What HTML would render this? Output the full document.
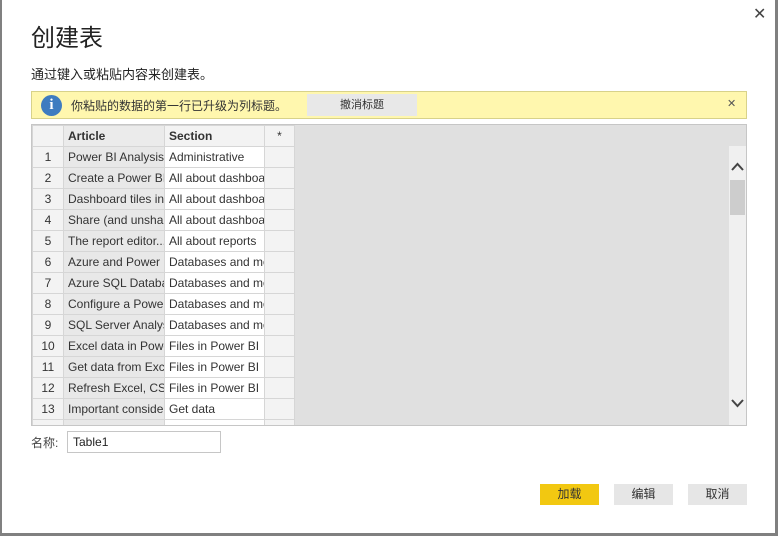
<!DOCTYPE html>
<html><head><meta charset="utf-8"><style>
*{margin:0;padding:0;box-sizing:border-box}
body{width:778px;height:536px;background:#fff;position:relative;overflow:hidden;font-family:"Segoe UI","Liberation Sans","Noto Sans CJK SC",sans-serif;color:#333}
.bl{position:absolute;left:0;top:0;width:2px;height:536px;background:#808080}
.br{position:absolute;right:0;top:0;width:3px;height:536px;background:#808080}
.bb{position:absolute;left:0;bottom:0;width:778px;height:3px;background:#808080}
.abs{position:absolute}
.title{left:31px;top:18px;font-size:24px;color:#222;font-family:"Liberation Sans","Noto Sans CJK SC",sans-serif}
.sub{left:31px;top:64px;font-size:13px;color:#222;font-family:"Liberation Sans","Noto Sans CJK SC",sans-serif}
.banner{left:31px;top:91px;width:716px;height:28px;background:#fff7ae;border:1px solid #d8d28a}
.grid{left:31px;top:124px;width:716px;height:302px;background:#e0e0e0;border:1px solid #c6c6c6;overflow:hidden}
table{border-collapse:collapse;font-size:12px;font-family:"Liberation Sans",sans-serif}
td{height:21px;border:1px solid #d6d6d6;white-space:nowrap;overflow:hidden;padding:0 4px;max-width:100px}
td.n{width:31px;background:#f3f3f3;text-align:center;padding:0}
td.a{width:101px;max-width:101px;background:#e8e8e8;color:#333}
td.s{width:100px;max-width:100px;background:#fff}
td.x{width:30px;background:#f3f3f3}
tr.h td{font-weight:bold;background:#f3f3f3}
.btn{position:absolute;top:484px;height:21px;width:59px;background:#e6e6e6;font-size:12px;text-align:center;line-height:21px;font-family:"Liberation Sans","Noto Sans CJK SC",sans-serif}
</style></head><body>
<div class="bl"></div><div class="br"></div><div class="bb"></div>
<div class="abs" style="left:753px;top:4px;font-size:16px;color:#444">✕</div>
<div class="abs title">创建表</div>
<div class="abs sub">通过键入或粘贴内容来创建表。</div>
<div class="abs banner">
 <div class="abs" style="left:9px;top:3px;width:21px;height:21px;border-radius:50%;background:#3e7cc0;color:#fff;font-weight:bold;font-size:15px;text-align:center;line-height:21px;font-family:'Liberation Serif',serif">i</div>
 <div class="abs" style="left:39px;top:5px;font-size:12px;color:#333;font-family:'Liberation Sans','Noto Sans CJK SC',sans-serif">你粘贴的数据的第一行已升级为列标题。</div>
 <div class="abs" style="left:275px;top:2px;width:110px;height:22px;background:#e8e8e8;font-size:11px;text-align:center;line-height:22px;font-family:'Liberation Sans','Noto Sans CJK SC',sans-serif">撤消标题</div>
 <div class="abs" style="left:695px;top:5px;font-size:11px;color:#555">✕</div>
</div>
<div class="abs grid">
<table>
<tr class="h"><td class="n"></td><td class="a" style="background:#ebebeb">Article</td><td class="s" style="background:#f3f3f3">Section</td><td class="x" style="text-align:center;font-weight:normal">*</td></tr>
<tr><td class="n">1</td><td class="a">Power BI Analysis T</td><td class="s">Administrative</td><td class="x"></td></tr>
<tr><td class="n">2</td><td class="a">Create a Power BI</td><td class="s">All about dashboards</td><td class="x"></td></tr>
<tr><td class="n">3</td><td class="a">Dashboard tiles in</td><td class="s">All about dashboards</td><td class="x"></td></tr>
<tr><td class="n">4</td><td class="a">Share (and unshare</td><td class="s">All about dashboards</td><td class="x"></td></tr>
<tr><td class="n">5</td><td class="a">The report editor...</td><td class="s">All about reports</td><td class="x"></td></tr>
<tr><td class="n">6</td><td class="a">Azure and Power BI</td><td class="s">Databases and more</td><td class="x"></td></tr>
<tr><td class="n">7</td><td class="a">Azure SQL Database</td><td class="s">Databases and more</td><td class="x"></td></tr>
<tr><td class="n">8</td><td class="a">Configure a Power</td><td class="s">Databases and more</td><td class="x"></td></tr>
<tr><td class="n">9</td><td class="a">SQL Server Analysis</td><td class="s">Databases and more</td><td class="x"></td></tr>
<tr><td class="n">10</td><td class="a">Excel data in Power</td><td class="s">Files in Power BI</td><td class="x"></td></tr>
<tr><td class="n">11</td><td class="a">Get data from Excel</td><td class="s">Files in Power BI</td><td class="x"></td></tr>
<tr><td class="n">12</td><td class="a">Refresh Excel, CSV</td><td class="s">Files in Power BI</td><td class="x"></td></tr>
<tr><td class="n">13</td><td class="a">Important consider</td><td class="s">Get data</td><td class="x"></td></tr>
<tr><td class="n"></td><td class="a"></td><td class="s"></td><td class="x"></td></tr>
</table>
<div class="abs" style="left:697px;top:21px;width:17px;height:280px;background:#f0f0f0">
 <svg class="abs" style="left:2px;top:16px" width="13" height="9"><path d="M1 8 L6.5 2 L12 8" stroke="#444" stroke-width="2" fill="none"/></svg>
 <div class="abs" style="left:1px;top:34px;width:15px;height:35px;background:#cdcdcd"></div>
 <svg class="abs" style="left:2px;top:253px" width="13" height="9"><path d="M1 1 L6.5 7 L12 1" stroke="#444" stroke-width="2" fill="none"/></svg>
</div>
</div>
<div class="abs" style="left:31px;top:434px;font-size:12px;color:#444;font-family:'Liberation Sans','Noto Sans CJK SC',sans-serif">名称:</div>
<div class="abs" style="left:67px;top:431px;width:154px;height:22px;border:1px solid #c6c6c6;font-size:12px;line-height:20px;padding-left:5px;color:#222;font-family:'Liberation Sans',sans-serif">Table1</div>
<div class="btn" style="left:540px;background:#f2c811">加载</div>
<div class="btn" style="left:614px">编辑</div>
<div class="btn" style="left:688px">取消</div>
</body></html>
